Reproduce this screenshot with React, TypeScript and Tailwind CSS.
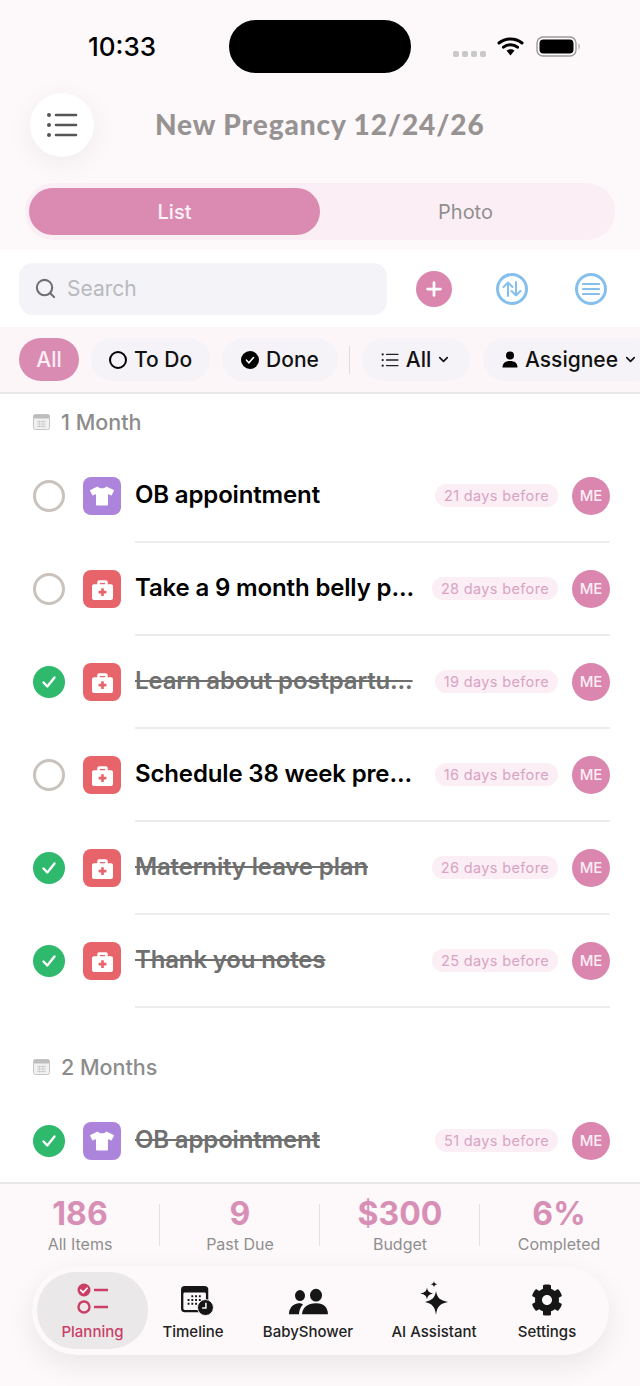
import { FaTshirt, FaBriefcaseMedical, FaCog } from "react-icons/fa";
import { Search, ChevronDown, Plus } from "lucide-react";

interface Task {
  title: string;
  days: number;
  kind: "shirt" | "med";
  done: boolean;
}

const monthOne: Task[] = [
  { title: "OB appointment", days: 21, kind: "shirt", done: false },
  { title: "Take a 9 month belly p...", days: 28, kind: "med", done: false },
  { title: "Learn about postpartu...", days: 19, kind: "med", done: true },
  { title: "Schedule 38 week pre...", days: 16, kind: "med", done: false },
  { title: "Maternity leave plan", days: 26, kind: "med", done: true },
  { title: "Thank you notes", days: 25, kind: "med", done: true },
];

const stats = [
  { value: "186", label: "All Items" },
  { value: "9", label: "Past Due" },
  { value: "$300", label: "Budget" },
  { value: "6%", label: "Completed" },
];

function ListGlyph({ size, color }: { size: number; color: string }) {
  return (
    <svg width={size} height={size} viewBox="0 0 32 32" fill="none">
      <g stroke={color} strokeWidth="2.6" strokeLinecap="round">
        <path d="M10 6h20M10 16h20M10 26h20" />
      </g>
      <circle cx="3" cy="6" r="2" fill={color} />
      <circle cx="3" cy="16" r="2" fill={color} />
      <circle cx="3" cy="26" r="2" fill={color} />
    </svg>
  );
}

function CalendarSmall() {
  return (
    <svg width="17" height="16" viewBox="0 0 17 16" fill="none">
      <rect x="0.5" y="0.5" width="16" height="15" rx="2" fill="#f1f1f1" stroke="#c6c6c6" />
      <rect x="0.5" y="0.5" width="16" height="4" rx="1.5" fill="#bdbdbd" />
      <path d="M4 7.5h9M4 10h9M4 12.5h9M6.5 6.5v7M10 6.5v7" stroke="#c9c9c9" strokeWidth="0.8" />
    </svg>
  );
}

function Check({ done }: { done: boolean }) {
  if (!done) {
    return <div className="h-8 w-8 shrink-0 rounded-full border-[3px] border-[#c9c2bd]" />;
  }
  return (
    <div className="flex h-8 w-8 shrink-0 items-center justify-center rounded-full bg-[#2fb96c]">
      <svg width="18" height="18" viewBox="0 0 18 18" fill="none">
        <path d="M3.5 9.5l3.8 4L14.5 4.5" stroke="white" strokeWidth="2.4" strokeLinecap="round" strokeLinejoin="round" />
      </svg>
    </div>
  );
}

function TaskRow({ task }: { task: Task }) {
  return (
    <div className="flex h-[93px] items-stretch pl-[33px] pr-[30px]">
      <div className="flex w-[102px] shrink-0 items-center pb-[1px]">
        <Check done={task.done} />
        <div
          className={`ml-[18px] flex h-[38px] w-[38px] items-center justify-center rounded-[8px] text-white ${
            task.kind === "shirt" ? "bg-[#ad84dc]" : "bg-[#e6646a]"
          }`}
        >
          {task.kind === "shirt" ? <FaTshirt size={24} /> : <FaBriefcaseMedical size={21} />}
        </div>
      </div>
      <div className="flex min-w-0 flex-1 items-center justify-between border-b-2 border-[#ececec]">
        <span
          className={`mb-[2px] whitespace-nowrap text-[24px] font-semibold tracking-[-0.15px] ${
            task.done ? "text-[#6f6f6f] line-through" : "text-black"
          }`}
        >
          {task.title}
        </span>
        <div className="flex items-center">
          <span className="flex h-[23px] items-center rounded-full bg-[#fbeef4] px-[9px] text-[14.5px] tracking-[0.35px] text-[#d9a3c4]">
            {task.days} days before
          </span>
          <div className="ml-[14px] flex h-[38px] w-[38px] items-center justify-center rounded-full bg-[#da86ae] pt-[1px] text-[15px] font-medium text-[#fdeef5]">
            ME
          </div>
        </div>
      </div>
    </div>
  );
}

function SectionHeader({ label }: { label: string }) {
  return (
    <div className="flex h-[56px] items-center gap-[11px] pl-[33px]">
      <CalendarSmall />
      <span className="text-[21.5px] font-medium text-[#8c8c8c]">{label}</span>
    </div>
  );
}

function Chip({ children, width }: { children: React.ReactNode; width: string }) {
  return (
    <div className={`flex h-[43px] shrink-0 items-center justify-center gap-[7px] rounded-full bg-[#f5f3f7] text-[21px] font-medium text-[#111] ${width}`}>
      {children}
    </div>
  );
}

function NavItem({ label, width, active, children }: { label: string; width: string; active?: boolean; children: React.ReactNode }) {
  return (
    <div className={`flex h-[77px] shrink-0 flex-col items-center ${width} ${active ? "rounded-[38px] bg-[#ebe8ea]" : ""}`}>
      <div className="flex h-[46px] items-end pb-[2px]">{children}</div>
      <span className={`mt-[3px] whitespace-nowrap text-[15px] font-medium ${active ? "text-[#c93f66]" : "text-[#222]"}`}>{label}</span>
    </div>
  );
}

export default function App() {
  return (
    <div className="flex h-[1386px] w-[640px] flex-col overflow-hidden bg-white font-['Inter',sans-serif]">
      {/* Header */}
      <div className="h-[250px] shrink-0 bg-[#fdf8fa]">
        <div className="flex h-[93px] pl-[88px] pt-[20px]">
          <span className="mt-[10px] h-[34px] w-[141px] text-[26px] font-medium leading-[34px] text-black">10:33</span>
          <div className="h-[53px] w-[182px] rounded-[27px] bg-black" />
          <div className="ml-[42px] mt-[6px] flex h-[40px] items-center">
            <div className="mt-[16px] flex gap-[3px]">
              {[0, 1, 2, 3].map((i) => (
                <div key={i} className="h-[6px] w-[6px] rounded-[2px] bg-[#c8c8c8]" />
              ))}
            </div>
            <svg className="ml-[11px]" width="27" height="20" viewBox="0 0 27 20" fill="none">
              <path d="M2 7c6.500-5.500 16.500-5.500 23 0" stroke="black" strokeWidth="3" strokeLinecap="round" />
              <path d="M6.500 11.200c4-3.400 10-3.400 14 0" stroke="black" strokeWidth="3" strokeLinecap="round" />
              <path d="M9.500 14.500l4 5 4-5c-2.300-1.800-5.700-1.800-8 0z" fill="black" />
            </svg>
            <svg className="ml-[12px]" width="45" height="21" viewBox="0 0 45 21" fill="none">
              <rect x="1" y="1" width="39" height="19" rx="6" stroke="#9a9a9a" strokeWidth="1.4" />
              <rect x="3.500" y="3.500" width="34" height="14" rx="4" fill="black" />
              <path d="M42.500 7.500c1.500.5 1.500 5.500 0 6z" fill="#9a9a9a" />
            </svg>
          </div>
        </div>
        <div className="flex h-[64px] items-center pl-[30px]">
          <div className="flex h-[64px] w-[64px] items-center justify-center rounded-full bg-white shadow-[0_6px_28px_rgba(0,0,0,0.06)]">
            <ListGlyph size={32} color="#555" />
          </div>
          <h1 className="mb-[3px] ml-[61px] whitespace-nowrap font-['Lato',sans-serif] text-[28px] font-black tracking-[0.9px] text-[#979393]">
            New Pregancy 12/24/26
          </h1>
        </div>
        <div className="ml-[25px] mt-[26px] flex h-[57px] w-[590px] items-center rounded-[28px] bg-[#fbeff5] pl-[4px]">
          <div className="flex h-[47px] w-[291px] items-center justify-center rounded-[24px] bg-[#db8bb2] text-[20px] font-medium text-[#fdf3f8]">
            List
          </div>
          <div className="flex-1 pr-[4px] text-center text-[20px] text-[#8f8f8f]">Photo</div>
        </div>
      </div>

      {/* Search */}
      <div className="flex h-[77px] shrink-0 items-center pl-[19px]">
        <div className="flex h-[52px] w-[368px] items-center gap-[10px] rounded-[14px] bg-[#f3f3f8] pl-[15px]">
          <Search size={23} color="#6f6f6f" strokeWidth={2.2} />
          <span className="mt-[1px] text-[21px] text-[#b9b9bd]">Search</span>
        </div>
        <div className="ml-[29px] flex h-[36px] w-[36px] items-center justify-center rounded-full bg-[#da86ae]">
          <Plus size={22} color="white" strokeWidth={3} />
        </div>
        <div className="ml-[44px] flex h-[32px] w-[32px] items-center justify-center rounded-full border-[3px] border-[#85bfee]">
          <svg width="20" height="16" viewBox="0 0 20 16" fill="none">
            <path d="M6 15V1.500M1.500 6L6 1.500 10.500 6M14 1v13.500M9.500 10l4.500 4.500 4.500-4.500" stroke="#85bfee" strokeWidth="2" strokeLinecap="round" strokeLinejoin="round" />
          </svg>
        </div>
        <div className="ml-[47px] flex h-[32px] w-[32px] items-center justify-center rounded-full border-[3px] border-[#85bfee]">
          <svg width="18" height="14" viewBox="0 0 18 14" fill="none">
            <path d="M1 2h16M1 7h16M1 12h16" stroke="#85bfee" strokeWidth="2.2" strokeLinecap="round" />
          </svg>
        </div>
      </div>

      {/* Filters */}
      <div className="flex h-[67px] shrink-0 items-center overflow-hidden border-b-2 border-[#e8e6e7] bg-[#fdf6f9] pl-[19px]">
        <div className="flex h-[43px] w-[60px] shrink-0 items-center justify-center rounded-full bg-[#da8bb2] text-[21px] font-medium text-[#fdeef5]">
          All
        </div>
        <div className="ml-[12px]">
          <Chip width="w-[119px]">
            <div className="h-[18px] w-[18px] rounded-full border-2 border-black" />
            To Do
          </Chip>
        </div>
        <div className="ml-[12px]">
          <Chip width="w-[116px]">
            <div className="flex h-[18px] w-[18px] items-center justify-center rounded-full bg-black">
              <svg width="10" height="10" viewBox="0 0 10 10" fill="none">
                <path d="M1.500 5.200l2.400 2.500L8.500 2.500" stroke="white" strokeWidth="1.600" strokeLinecap="round" />
              </svg>
            </div>
            Done
          </Chip>
        </div>
        <div className="ml-[11px] h-[28px] w-px shrink-0 bg-[#dedcdd]" />
        <div className="ml-[12px]">
          <Chip width="w-[108px]">
            <ListGlyph size={18} color="#222" />
            All
            <ChevronDown size={15} strokeWidth={2.6} className="-ml-[2px]" />
          </Chip>
        </div>
        <div className="ml-[13px]">
          <Chip width="w-[174px]">
            <svg width="16" height="17" viewBox="0 0 16 17" fill="black">
              <circle cx="8" cy="4.500" r="4" />
              <path d="M0.500 16.500c0-4.500 3-6.500 7.500-6.500s7.500 2 7.500 6.500z" />
            </svg>
            Assignee
            <ChevronDown size={15} strokeWidth={2.6} className="-ml-[2px]" />
          </Chip>
        </div>
      </div>

      {/* Task list */}
      <div className="min-h-0 flex-1 overflow-hidden">
        <SectionHeader label="1 Month" />
        {monthOne.map((task) => (
          <TaskRow key={task.title} task={task} />
        ))}
        <div className="mt-[31px]">
          <SectionHeader label="2 Months" />
        </div>
        <TaskRow task={{ title: "OB appointment", days: 51, kind: "shirt", done: true }} />
      </div>

      {/* Footer */}
      <div className="h-[204px] shrink-0 border-t-2 border-[#e8e6e7] bg-[#fdf8fa]">
        <div className="flex h-[82px] pt-[11px]">
          {stats.map((stat, i) => (
            <div key={stat.label} className={`relative flex w-[160px] flex-col items-center ${i === 3 ? "-ml-[1px]" : ""}`}>
              <span className="text-[32px] font-bold leading-[38px] text-[#d88fb6]">{stat.value}</span>
              <span className="text-[16px] leading-[22px] text-[#8f8f8f]">{stat.label}</span>
              {i < 3 && <div className="absolute right-0 top-[9px] h-[42px] w-px bg-[#e3e0e2]" />}
            </div>
          ))}
        </div>
        <div className="ml-[32px] flex h-[89px] w-[577px] items-center rounded-[45px] bg-[#fdf8fa] pl-[5px] shadow-[0_10px_28px_rgba(0,0,0,0.08)]">
          <NavItem label="Planning" width="w-[111px]" active>
            <svg width="34" height="34" viewBox="0 0 34 34" fill="none">
              <circle cx="8" cy="8" r="6.500" fill="#c93f66" />
              <path d="M4.800 8.200l2.300 2.400 4-4.400" stroke="white" strokeWidth="1.700" strokeLinecap="round" />
              <circle cx="8" cy="25" r="5.500" stroke="#c93f66" strokeWidth="2.400" />
              <path d="M18 8h14M18 25h14" stroke="#c93f66" strokeWidth="2.600" />
            </svg>
          </NavItem>
          <NavItem label="Timeline" width="w-[90px]">
            <svg className="ml-[8px]" width="36" height="31" viewBox="0 0 36 33" fill="none">
              <rect x="1" y="1" width="29" height="28" rx="4" fill="#161616" />
              <rect x="3.500" y="8" width="24" height="18.500" rx="1.500" fill="#fdf8fa" />
              <path d="M12 12h2M16 12h2M20 12h2M8 16h2M12 16h2M16 16h2M20 16h2M8 20h2M12 20h2M16 20h2" stroke="#161616" strokeWidth="2" />
              <circle cx="27" cy="24" r="8.500" fill="#161616" stroke="#fdf8fa" strokeWidth="1" />
              <path d="M27.500 19v5.500h-4" stroke="white" strokeWidth="1.600" />
            </svg>
          </NavItem>
          <NavItem label="BabyShower" width="w-[140px]">
            <svg className="mb-[1px]" width="40" height="27" viewBox="0 0 40 32" preserveAspectRatio="none" fill="#161616">
              <ellipse cx="12" cy="9" rx="5" ry="6.500" />
              <ellipse cx="28" cy="8.500" rx="6" ry="7.500" />
              <path d="M1 31c0-7 3.500-12 9.500-13 2 0 3.500.5 4.500 1.500-2.500 3-4 7-4 11.500z" />
              <path d="M14 31c.5-8 5.500-13 14-13s11.500 5 12 13z" />
            </svg>
          </NavItem>
          <NavItem label="AI Assistant" width="w-[112px]">
            <svg width="30" height="36" viewBox="0 0 30 36" fill="#161616">
              <path d="M17 11c1 6.500 4 9.500 12 11-8 1.500-11 4.500-12 13-1-8.500-4-11.500-11-13 7-1.500 10-4.500 11-11z" />
              <path d="M8 7.500c.5 3.500 2 5 6 6-4 1-5.500 2.500-6 6-.5-3.500-2-5-6.500-6 4.500-1 6-2.500 6.500-6z" />
              <path d="M15 1c.3 2 1 2.800 3.200 3.200-2.200.4-2.900 1.200-3.200 3.200-.3-2-1-2.800-3.200-3.200 2.200-.4 2.900-1.200 3.200-3.200z" />
            </svg>
          </NavItem>
          <NavItem label="Settings" width="w-[114px]">
            <FaCog size={32} color="#161616" />
          </NavItem>
        </div>
      </div>
    </div>
  );
}
